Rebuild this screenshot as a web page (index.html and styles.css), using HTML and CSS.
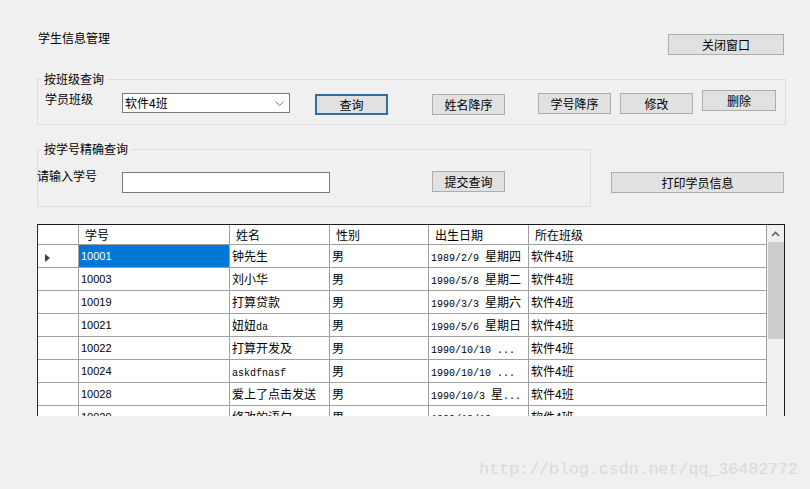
FILE: index.html
```html
<!DOCTYPE html>
<html lang="zh-CN">
  <head>
    <meta charset="UTF-8" />
    <meta name="viewport" content="width=device-width, initial-scale=1.0" />
    <title>学生信息管理</title>
    <link rel="stylesheet" href="styles.css">
  </head>
  <body>
    <div class="window">
      <div class="header">
        <div class="title">学生信息管理</div>
        <button class="btn btn-close">关闭窗口</button>
      </div>

      <fieldset class="group group-class">
        <legend>按班级查询</legend>
        <div class="group-row row-class">
          <span class="label lbl-class">学员班级</span>
          <div class="combo">
            <span>软件4班</span>
            <svg width="9" height="5" viewBox="0 0 9 5"><polyline points="0.5,0.5 4.5,4.5 8.5,0.5" fill="none" stroke="#7a7a7a" stroke-width="1"/></svg>
          </div>
          <button class="btn btn-query">查询</button>
          <button class="btn btn-name">姓名降序</button>
          <button class="btn btn-no">学号降序</button>
          <button class="btn btn-edit">修改</button>
          <button class="btn btn-del">删除</button>
        </div>
      </fieldset>

      <div class="second">
        <fieldset class="group group-id">
          <legend>按学号精确查询</legend>
          <div class="group-row row-id">
            <span class="label lbl-id">请输入学号</span>
            <div class="textbox"></div>
            <button class="btn btn-submit">提交查询</button>
          </div>
        </fieldset>
        <button class="btn btn-print">打印学员信息</button>
      </div>

      <div class="grid-wrap">
        <div class="grid">
          <div class="cell rh hd"></div>
          <div class="cell hd">学号</div>
          <div class="cell hd">姓名</div>
          <div class="cell hd">性别</div>
          <div class="cell hd">出生日期</div>
          <div class="cell hd">所在班级</div>

          <div class="cell rh"><span class="arrow"></span></div>
          <div class="cell num selected">10001</div>
          <div class="cell">钟先生</div>
          <div class="cell">男</div>
          <div class="cell"><span class="mono">1989/2/9 </span>星期四</div>
          <div class="cell">软件4班</div>

          <div class="cell rh"></div>
          <div class="cell num">10003</div>
          <div class="cell">刘小华</div>
          <div class="cell">男</div>
          <div class="cell"><span class="mono">1990/5/8 </span>星期二</div>
          <div class="cell">软件4班</div>

          <div class="cell rh"></div>
          <div class="cell num">10019</div>
          <div class="cell">打算贷款</div>
          <div class="cell">男</div>
          <div class="cell"><span class="mono">1990/3/3 </span>星期六</div>
          <div class="cell">软件4班</div>

          <div class="cell rh"></div>
          <div class="cell num">10021</div>
          <div class="cell">妞妞<span class="mono">da</span></div>
          <div class="cell">男</div>
          <div class="cell"><span class="mono">1990/5/6 </span>星期日</div>
          <div class="cell">软件4班</div>

          <div class="cell rh"></div>
          <div class="cell num">10022</div>
          <div class="cell">打算开发及</div>
          <div class="cell">男</div>
          <div class="cell"><span class="mono">1990/10/10 ...</span></div>
          <div class="cell">软件4班</div>

          <div class="cell rh"></div>
          <div class="cell num">10024</div>
          <div class="cell"><span class="mono">askdfnasf</span></div>
          <div class="cell">男</div>
          <div class="cell"><span class="mono">1990/10/10 ...</span></div>
          <div class="cell">软件4班</div>

          <div class="cell rh"></div>
          <div class="cell num">10028</div>
          <div class="cell">爱上了点击发送</div>
          <div class="cell">男</div>
          <div class="cell"><span class="mono">1990/10/3 </span>星<span class="mono">...</span></div>
          <div class="cell">软件4班</div>

          <div class="cell rh"></div>
          <div class="cell num">10029</div>
          <div class="cell">修改的语句</div>
          <div class="cell">男</div>
          <div class="cell"><span class="mono">1990/10/10 ...</span></div>
          <div class="cell">软件4班</div>
        </div>
        <div class="scrollbar">
          <svg class="up" width="9" height="6" viewBox="0 0 9 6"><polyline points="1,5 4.5,1.5 8,5" fill="none" stroke="#606060" stroke-width="1.6"/></svg>
          <div class="thumb"></div>
        </div>
      </div>

      <div class="watermark">http://blog.csdn.net/qq_36482772</div>
    </div>
  </body>
</html>
```

FILE: styles.css
```css
body {
  margin: 0;
  background: #f0f0f0;
  font-family: "Noto Sans CJK SC", "Liberation Sans", sans-serif;
  font-size: 12px;
  color: #000;
}

.window {
  position: relative;
  width: 810px;
  height: 489px;
  overflow: hidden;
  padding-left: 37px;
  box-sizing: border-box;
}

.header {
  display: flex;
  align-items: flex-start;
  margin-top: 30px;
  height: 25px;
}

.title {
  margin-left: 1px;
  line-height: 16px;
}

.btn {
  flex-shrink: 0;
  height: 21px;
  padding: 0;
  background: #e1e1e1;
  border: 1px solid #adadad;
  font-family: "Noto Sans CJK SC", sans-serif;
  font-size: 12px;
  line-height: 17px;
  color: #000;
}

.btn-close {
  width: 116px;
  margin-left: auto;
  margin-right: 26px;
  margin-top: 4px;
}

.group {
  margin: 0;
  padding: 4px 0 0 0;
  border: 1px solid #dcdcdc;
  min-width: 0;
}

.group legend {
  margin-left: 3px;
  padding: 0 3px;
  line-height: 14px;
  font-size: 12px;
}

.group-row {
  display: flex;
  align-items: flex-start;
}

.label {
  flex-shrink: 0;
  line-height: 16px;
}

.group-class {
  width: 749px;
  box-sizing: border-box;
  margin-top: 17px;
}

.row-class {
  height: 34px;
}

.lbl-class {
  margin-left: 7px;
  margin-top: 1px;
  width: 48px;
}

.combo {
  flex-shrink: 0;
  display: flex;
  align-items: center;
  justify-content: space-between;
  box-sizing: border-box;
  width: 168px;
  height: 20px;
  margin-left: 29px;
  margin-top: 3px;
  padding: 0 5px 0 2px;
  background: #fff;
  border: 1px solid #7a7a7a;
  line-height: 16px;
}

.btn-query {
  width: 73px;
  margin-left: 25px;
  margin-top: 4px;
  border: 2px solid #2f6fa6;
  line-height: 15px;
}

.btn-name {
  width: 73px;
  margin-left: 44px;
  margin-top: 4px;
}

.btn-no {
  width: 73px;
  margin-left: 33px;
  margin-top: 3px;
}

.btn-edit {
  width: 73px;
  margin-left: 9px;
  margin-top: 3px;
}

.btn-del {
  width: 74px;
  margin-left: 9px;
  margin-top: 0;
}

.second {
  display: flex;
  align-items: flex-start;
  margin-top: 17px;
}

.group-id {
  width: 554px;
  box-sizing: border-box;
  padding-top: 12px;
}

.row-id {
  height: 38px;
}

.lbl-id {
  margin-left: -1px;
  width: 60px;
}

.textbox {
  flex-shrink: 0;
  box-sizing: border-box;
  width: 208px;
  height: 21px;
  margin-left: 25px;
  margin-top: 4px;
  background: #fff;
  border: 1px solid #7a7a7a;
}

.btn-submit {
  width: 73px;
  margin-left: 102px;
  margin-top: 3px;
}

.btn-print {
  width: 173px;
  margin-left: 20px;
  margin-top: 30px;
}

.grid-wrap {
  display: flex;
  width: 748px;
  height: 192px;
  margin-top: 17px;
  box-sizing: border-box;
  border-top: 1px solid #1a1a1a;
  border-left: 1px solid #2a2a2a;
  border-right: 1px solid #1a1a1a;
  overflow: hidden;
  background: #fff;
}

.grid {
  display: grid;
  grid-template-columns: 41px 151px 100px 99px 100px 238px;
  grid-auto-rows: 23px;
  grid-template-rows: 20px;
  align-content: start;
}

.cell {
  box-sizing: border-box;
  padding-left: 2px;
  border-right: 1px solid #a0a0a0;
  border-bottom: 1px solid #a0a0a0;
  white-space: pre;
  overflow: hidden;
  background: #fff;
  line-height: 22px;
}

.cell.hd {
  padding-left: 6px;
  line-height: 19px;
}

.cell.rh {
  padding-left: 7px;
}

.num {
  font-family: "Liberation Sans", sans-serif;
  font-size: 11px;
}

.mono {
  font-family: "Liberation Mono", monospace;
  font-size: 10px;
}

.selected {
  background: #0078d7;
  color: #fff;
}

.arrow {
  display: inline-block;
  vertical-align: middle;
  width: 0;
  height: 0;
  border-top: 4px solid transparent;
  border-bottom: 4px solid transparent;
  border-left: 5px solid #404040;
}

.scrollbar {
  position: relative;
  width: 17px;
  background: #f0f0f0;
  flex-shrink: 0;
}

.scrollbar .up {
  display: block;
  margin: 6px 0 0 4px;
}

.thumb {
  width: 16px;
  height: 97px;
  margin: 5px 0 0 1px;
  background: #cdcdcd;
}

.watermark {
  position: absolute;
  right: 12px;
  bottom: 10px;
  font-family: "Liberation Mono", monospace;
  font-size: 16.6px;
  color: #d9d9d9;
}
```
